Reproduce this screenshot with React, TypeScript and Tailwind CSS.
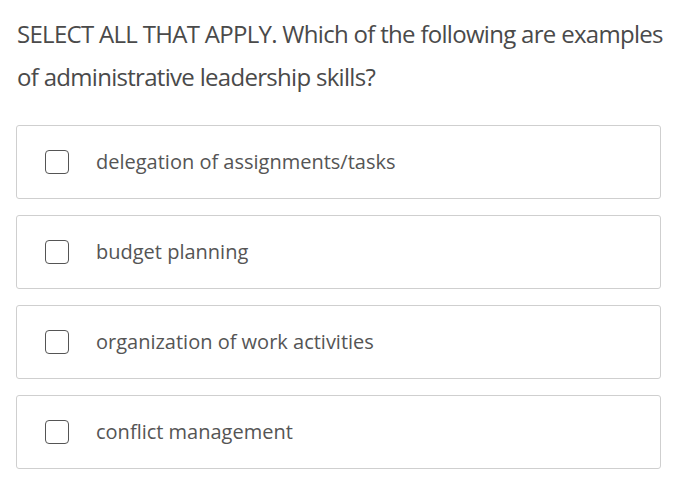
import React from "react";

const options = [
  "delegation of assignments/tasks",
  "budget planning",
  "organization of work activities",
  "conflict management",
];

export default function App() {
  return (
    <div className="w-[676px] h-[483px] bg-white px-4 pt-[12px]" style={{ fontFamily: '"Open Sans", sans-serif' }}>
      <p className="w-[655px] text-[24px] leading-[43px] tracking-[-0.7px] text-[#4a4a4a] pl-[1px]">
        SELECT ALL THAT APPLY. Which of the following are examples of administrative leadership skills?
      </p>
      <div className="mt-[27px] flex flex-col gap-4 w-[645px]">
        {options.map((o) => (
          <label key={o} className="flex items-center h-[74px] border border-[#cfcfcf] rounded-[3px] pl-[28px]">
            <span className="w-6 h-6 border-[1.5px] border-[#555] rounded-[4px] shrink-0" />
            <span className="ml-[27px] text-[20px] text-[#555]">{o}</span>
          </label>
        ))}
      </div>
    </div>
  );
}
